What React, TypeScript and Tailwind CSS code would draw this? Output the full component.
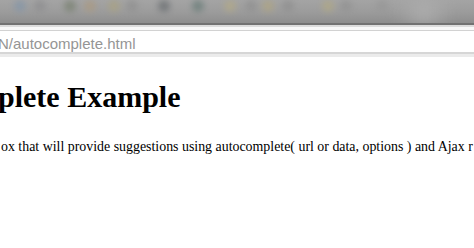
import React from "react";

// blurred toolbar icons, left to right
const toolbarIcons = [
  { cls: "ml-[14px] bg-[#8596a8]" },
  { cls: "ml-[8px] bg-[#8e8e90]" },
  { cls: "ml-[18px] bg-[#7a8272]" },
  { cls: "ml-[8px] bg-[#ab9a82]" },
  { cls: "ml-[12px] bg-[#a9a283]" },
  { cls: "ml-[6px] bg-[#909090]" },
  { cls: "ml-[20px] bg-[#6c7073]" },
  { cls: "ml-[22px] bg-[#6b7e7a]" },
  { cls: "ml-[20px] bg-[#b2a988]" },
  { cls: "ml-[9px] bg-[#909090]" },
  { cls: "ml-[5px] bg-[#afa584]" },
  { cls: "ml-[8px] bg-[#8f8f8f]" },
  { cls: "ml-[28px] bg-[#b0a886]" },
  { cls: "ml-[6px] bg-[#929292]" },
  { cls: "ml-[24px] bg-[#979797]" },
];

const Toolbar = () => (
  <div className="h-[25px] bg-gradient-to-b from-[#a4a4a4] via-[#9c9c9c] to-[#8e8e8e] border-b-2 border-[#727272] overflow-hidden relative">
    <div className="flex items-center h-[12px] blur-[3px] opacity-80">
      {toolbarIcons.map((icon, i) => (
        <div key={i} className={`w-[12px] h-[12px] rounded-full shrink-0 ${icon.cls}`} />
      ))}
    </div>
    <div className="absolute right-[20px] top-0 w-[60px] h-[25px] bg-gradient-to-r from-transparent via-[#b2b2b2] to-transparent blur-[6px] opacity-70" />
  </div>
);

const AddressBar = () => (
  <div>
    <div className="h-[2px] bg-[#dcdcdc]" />
    <div className="h-[3px] bg-[#f8f8f8]" />
    <div className="h-[24px] bg-white border-t border-b-2 border-t-[#d2d2d2] border-b-[#d6d6d6] flex items-center pt-[3px] overflow-hidden">
      <span
        className="text-[15px] text-[#959595] whitespace-nowrap -ml-[2px] leading-none"
        style={{ fontFamily: '"Liberation Sans", Arial, sans-serif' }}
      >
        N/autocomplete.html
      </span>
    </div>
    <div className="h-[3px] bg-[#ebebeb]" />
  </div>
);

export default function App() {
  return (
    <div className="w-[474px] h-[248px] bg-white overflow-hidden">
      <Toolbar />
      <AddressBar />
      <div
        className="text-black overflow-hidden"
        style={{ fontFamily: '"Liberation Serif", "Times New Roman", serif' }}
      >
        <h1 className="text-[30px] font-bold leading-none whitespace-nowrap -ml-[2px] mt-[25px]">
          plete Example
        </h1>
        <p className="text-[13.9px] leading-none whitespace-nowrap mt-[28px] ml-[1px]">
          ox that will provide suggestions using autocomplete( url or data, options ) and Ajax r
        </p>
      </div>
    </div>
  );
}
